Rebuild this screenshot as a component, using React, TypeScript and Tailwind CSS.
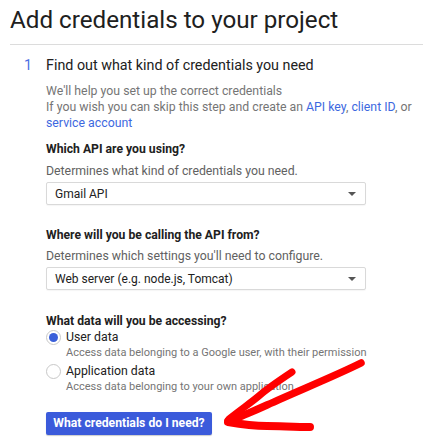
const Select = ({ value }: { value: string }) => (
  <div className="mt-[3px] flex h-[23px] w-[320px] items-center justify-between rounded-[2px] border border-[#d9d9d9] bg-white pl-[8px] pr-[9px] shadow-[0_1px_1px_rgba(0,0,0,0.04)]">
    <span className="text-[12px] leading-[16px] text-[#212121]">{value}</span>
    <svg width="8" height="4" viewBox="0 0 8 4">
      <path d="M0 0 L8 0 L4 4 Z" fill="#555" />
    </svg>
  </div>
);

const Radio = ({ checked }: { checked?: boolean }) => (
  <span className="flex h-[15px] w-[15px] shrink-0 items-center justify-center rounded-full border border-[#c8c8c8] bg-white">
    {checked && <span className="h-[9px] w-[9px] rounded-full bg-[#3a5fd9]" />}
  </span>
);

export default function App() {
  return (
    <div className="relative h-[441px] w-[423px] overflow-hidden bg-white font-['Roboto','Liberation_Sans',sans-serif] text-[#212121]">
      <h1 className="pl-[10px] pt-[5px] text-[24.2px] font-normal leading-[30px] text-[#202020]">
        Add credentials to your project
      </h1>
      <div className="ml-[10px] mt-[9px] border-t border-[#dcdcdc]" />

      <div className="mt-[10px] flex">
        <div className="w-[46px] pl-[24px] text-[14.3px] leading-[20px] text-[#4a6fe3]">1</div>
        <div className="flex-1">
          <div className="text-[14.3px] leading-[20px] text-[#212121]">Find out what kind of credentials you need</div>

          <div className="mt-[8px] text-[12.3px] leading-[16px] text-[#757575]">
            <p>We'll help you set up the correct credentials</p>
            <p>
              If you wish you can skip this step and create an{' '}
              <span className="text-[#3d68e0]">API key</span>,{' '}
              <span className="text-[#3d68e0]">client ID</span>, or
            </p>
            <p className="text-[#3d68e0]">service account</p>
          </div>

          <div className="mt-[10px] text-[12.2px] font-bold leading-[16px] text-[#212121]">Which API are you using?</div>
          <div className="mt-[6px] text-[12.3px] leading-[16px] text-[#616161]">Determines what kind of credentials you need.</div>
          <Select value="Gmail API" />

          <div className="mt-[22px] text-[12.2px] font-bold leading-[16px] text-[#212121]">Where will you be calling the API from?</div>
          <div className="mt-[5px] text-[12.3px] leading-[16px] text-[#616161]">Determines which settings you'll need to configure.</div>
          <Select value="Web server (e.g. node.js, Tomcat)" />

          <div className="mt-[23px] text-[12.2px] font-bold leading-[16px] text-[#212121]">What data will you be accessing?</div>
          <div className="flex">
            <div className="flex h-[16px] items-center">
              <Radio checked />
            </div>
            <div className="ml-[5px]">
              <div className="text-[12.3px] leading-[16px] text-[#212121]">User data</div>
              <div className="text-[11px] leading-[15px] text-[#757575]">
                Access data belonging to a Google user, with their permission
              </div>
            </div>
          </div>
          <div className="mt-[3px] flex">
            <div className="flex h-[16px] items-center">
              <Radio />
            </div>
            <div className="ml-[5px]">
              <div className="text-[12.3px] leading-[16px] text-[#212121]">Application data</div>
              <div className="text-[11px] leading-[15px] text-[#757575]">
                Access data belonging to your own application
              </div>
            </div>
          </div>

          <button className="mt-[18px] flex h-[23px] w-[166px] items-center justify-center rounded-[2px] bg-[#3b5bdb] text-[12.2px] font-bold text-white shadow-[0_1px_1px_rgba(0,0,0,0.2)]">
            What credentials do I need?
          </button>
        </div>
      </div>

      {/* hand-drawn red arrow */}
      <svg className="pointer-events-none absolute left-0 top-0" width="423" height="441" viewBox="0 0 423 441">
        <g fill="none" stroke="#ff0000" strokeLinecap="round" strokeLinejoin="round">
          <path d="M361 363 C 335 376, 300 390, 267 405 S 240 416, 228 421" strokeWidth="7.5" />
          <path d="M292 372 C 280 380, 268 388, 260 395 S 240 410, 229 419" strokeWidth="7" />
          <path d="M228 422 C 245 425, 255 426, 267 426 S 295 427, 310 427" strokeWidth="8" />
        </g>
      </svg>
    </div>
  );
}
